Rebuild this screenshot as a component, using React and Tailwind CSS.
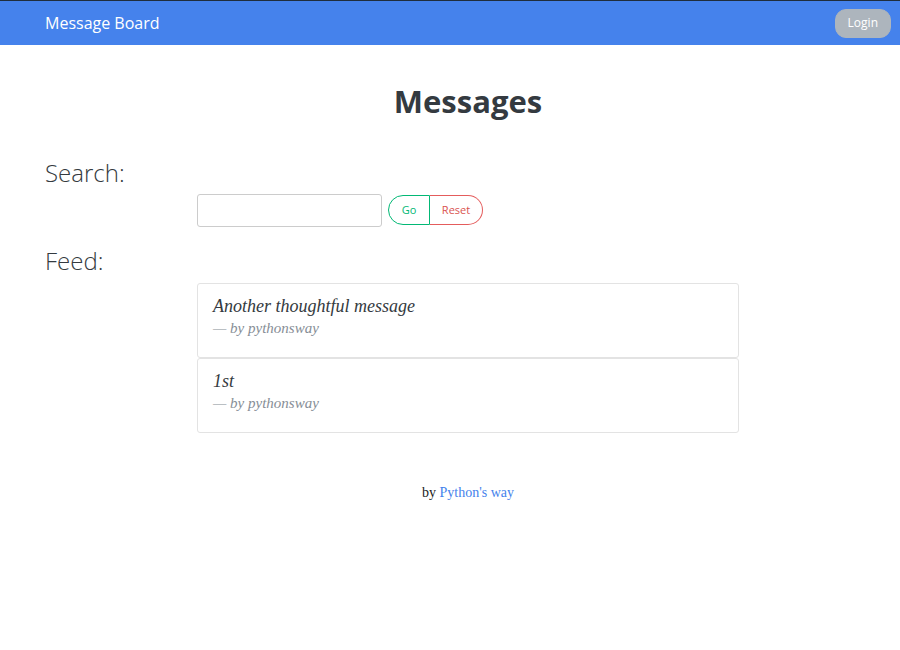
import React, { useState } from "react";

const sans = { fontFamily: "'Open Sans', 'Noto Sans', sans-serif" };
const serif = { fontFamily: "'Liberation Serif', serif" };

const messages = [
  { id: 1, text: "Another thoughtful message", author: "pythonsway" },
  { id: 2, text: "1st", author: "pythonsway" },
];

const App = () => {
  const [query, setQuery] = useState("");

  return (
    <div className="min-h-[650px] bg-white text-[#343a40]" style={serif}>
      {/* Navbar */}
      <nav
        className="h-[45px] bg-[#4582ec] border-t border-[#1f2d3d] flex items-center justify-between pl-[45px] pr-[9px]"
        style={sans}
      >
        <span className="text-white text-[16px]">Message Board</span>
        <button className="h-[29px] px-[12px] rounded-[11px] bg-[#adb5bd] text-white text-[12px] border border-[#adb5bd]">
          Login
        </button>
      </nav>

      <div className="pl-[45px] pr-[9px]">
        <h1
          className="text-center text-[31px] font-bold text-[#343a40] mt-[38px] leading-[1.2]"
          style={sans}
        >
          Messages
        </h1>

        {/* Search */}
        <h2 className="text-[24px] font-light text-[#343a40] mt-[39px] leading-[1.2]" style={sans}>
          Search:
        </h2>
        <form
          className="flex items-center ml-[152px] mt-[6px]"
          onSubmit={(e) => e.preventDefault()}
        >
          <input
            type="text"
            value={query}
            onChange={(e) => setQuery(e.target.value)}
            className="w-[185px] h-[33px] border border-[#ccc] rounded-[3px] px-2 outline-none"
          />
          <div className="flex ml-[6px]" style={sans}>
            <button
              type="submit"
              className="h-[30px] w-[42px] border border-[#02b875] text-[#02b875] text-[11px] rounded-l-[15px]"
            >
              Go
            </button>
            <button
              type="button"
              onClick={() => setQuery("")}
              className="h-[30px] w-[53px] border border-l-0 border-[#e45c5c] text-[#d9534f] text-[11px] rounded-r-[15px]"
            >
              Reset
            </button>
          </div>
        </form>

        {/* Feed */}
        <h2 className="text-[24px] font-light text-[#343a40] mt-[20px] leading-[1.2]" style={sans}>
          Feed:
        </h2>
        <div className="ml-[152px] w-[542px] mt-[7px] flex flex-col">
          {messages.map((m) => (
            <div
              key={m.id}
              className="h-[75px] border border-[#e3e3e3] rounded-[3px] px-[15px] pt-[11px]"
            >
              <p className="italic text-[18px] text-[#343a40] leading-[22px]">{m.text}</p>
              <p className="italic text-[15px] text-[#868e96] leading-[20px] mt-[1px]">
                — by {m.author}
              </p>
            </div>
          ))}
        </div>

        {/* Footer */}
        <p className="text-center text-[14px] mt-[49px] text-[#222]">
          by <a className="text-[#4582ec]" href="#">Python's way</a>
        </p>
      </div>
    </div>
  );
};

export default App;
